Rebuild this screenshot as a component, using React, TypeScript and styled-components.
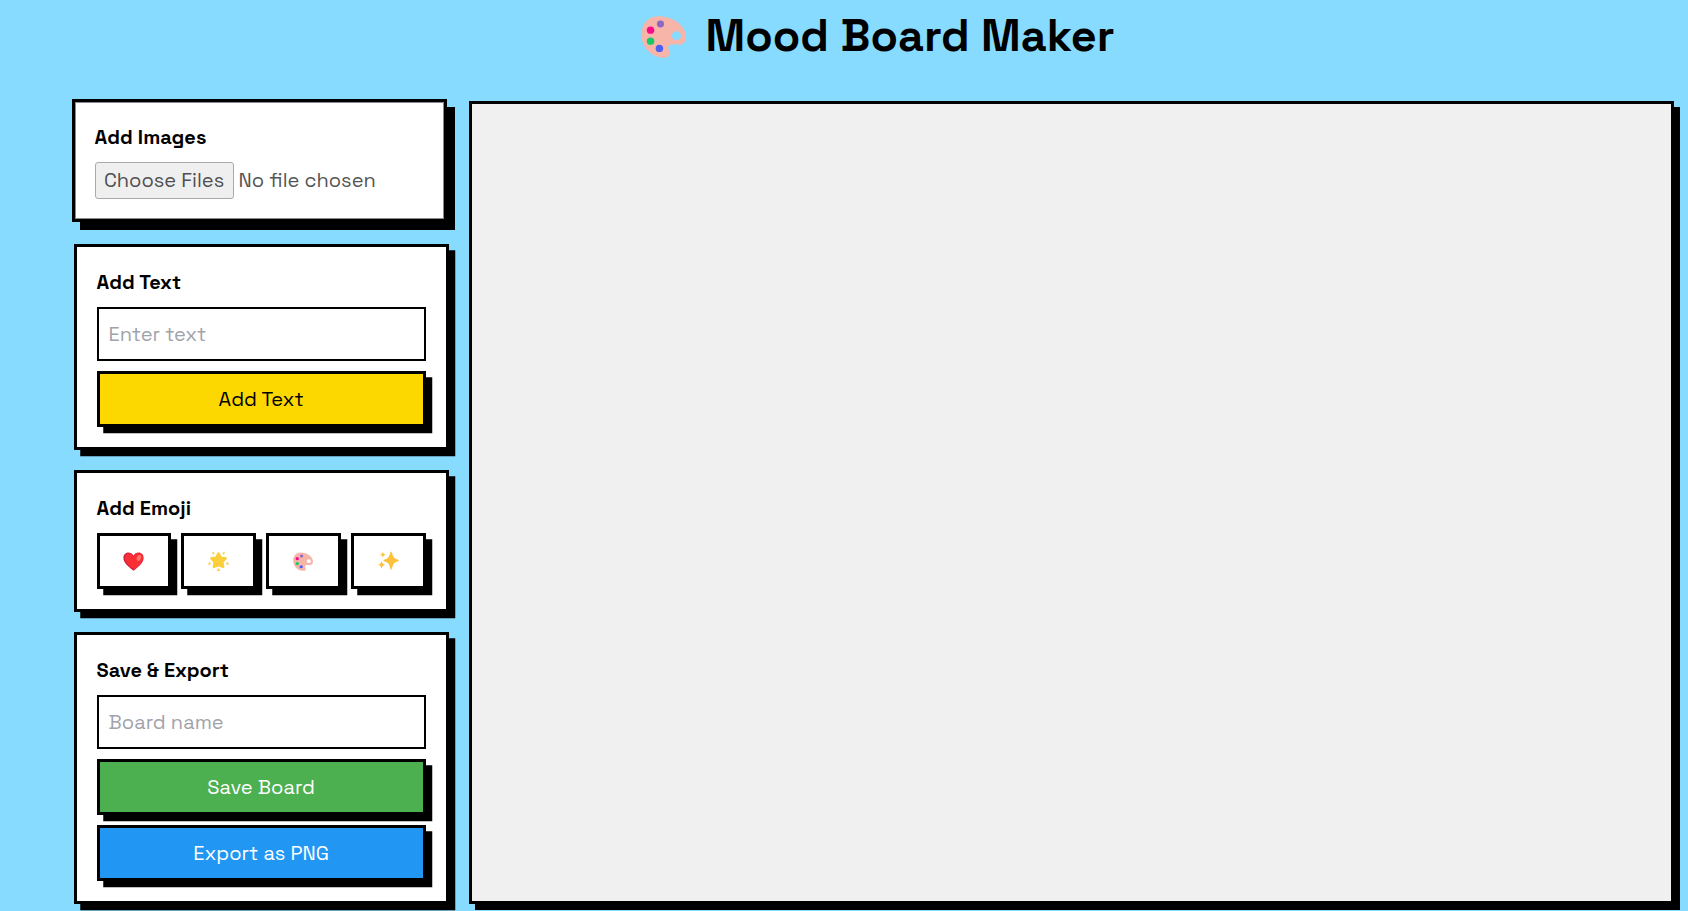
import React from "react";
import styled, { createGlobalStyle, css } from "styled-components";

const GlobalStyle = createGlobalStyle`
  *, *::before, *::after { box-sizing: border-box; }
  body {
    margin: 0;
    overflow: hidden;
    background: #86dbff;
    color: #000;
    font-family: "Space Grotesk", Inter, sans-serif;
    font-size: 20px;
    line-height: 30px;
  }
`;

const Page = styled.div`
  height: 911px;
  padding: 0 14.4px 7px 73.6px;
  display: flex;
  flex-direction: column;
`;

const Header = styled.header`
  height: 71px;
  margin-bottom: 30px;
  padding-left: 8px;
  display: flex;
  align-items: center;
  justify-content: center;
  gap: 20px;
`;

const TitleIcon = styled.span`
  display: flex;
  padding-top: 2px;
`;

const Title = styled.h1`
  margin: 0;
  font-size: 45px;
  font-weight: 700;
  line-height: 55px;
`;

const Workspace = styled.main`
  flex: 1;
  display: grid;
  grid-template-columns: 375px 1fr;
  gap: 20px;
`;

const Sidebar = styled.aside`
  display: flex;
  flex-direction: column;
  gap: 20px;
`;

const Card = styled.section<{ $raised?: boolean }>`
  padding: 20px;
  display: flex;
  flex-direction: column;
  gap: 10px;
  background: #fff;
  border: 3px solid #000;
  box-shadow: 6.25px 6.25px 0 #000;
  ${(p) =>
    p.$raised &&
    css`
      transform: translate(-2px, -2px);
      box-shadow: 8px 8px 0 #000, inset 0 0 0 1px #8a8a8a;
    `}
`;

const CardTitle = styled.h2`
  margin: 0;
  font-size: 20px;
  font-weight: 600;
  line-height: 30px;
`;

const FilePicker = styled.div`
  height: 37px;
  display: flex;
  align-items: center;
  gap: 5px;
  color: #555;
`;

const FileButton = styled.button`
  width: 139px;
  height: 37px;
  padding: 0 0 1px;
  border: 1px solid #aaa;
  border-radius: 3px;
  background: #efefef;
  color: #505050;
  font: inherit;
`;

const FileStatus = styled.span`
  padding-bottom: 1px;
`;

const Field = styled.input`
  width: 100%;
  height: 54px;
  padding: 10px;
  border: 2px solid #000;
  border-radius: 0;
  background: #fff;
  font: inherit;
  &::placeholder { color: #9fa3aa; opacity: 1; }
`;

const Button = styled.button<{ $fill: string; $ink?: string }>`
  height: 56px;
  padding: 0;
  display: flex;
  align-items: center;
  justify-content: center;
  border: 3px solid #000;
  box-shadow: 6.25px 6.25px 0 #000;
  background: ${(p) => p.$fill};
  color: ${(p) => p.$ink ?? "#000"};
  font: inherit;
`;

const EmojiGrid = styled.div`
  display: grid;
  grid-template-columns: repeat(4, 1fr);
  gap: 10px;
`;

const Canvas = styled.div`
  background: #f0f0f0;
  border: 3px solid #000;
  box-shadow: 6px 6px 0 #000;
`;

const Palette = ({ width, height }: { width: number; height: number }) => (
  <svg width={width} height={height} viewBox="20 20 132 130" preserveAspectRatio="none" aria-label="palette">
    <path
      fill="#f7b5aa"
      fillRule="evenodd"
      d="M72 24C42 24 21 47 21 78c0 40 30 68 62 71 14 1 22-4 21-15-1-8-5-11-4-17 1-5 5-8 10-8h22c13 0 20-9 20-22 0-36-40-63-80-63Zm52 45a13.500 13.500 0 1 1 0 27a13.500 13.500 0 1 1 0-27Z"
    />
    <circle cx="77" cy="47" r="10.500" fill="#8e66c4" />
    <circle cx="48" cy="66" r="11" fill="#f80a8c" />
    <circle cx="48" cy="99" r="11" fill="#14ca66" />
    <circle cx="74" cy="121" r="11" fill="#4b5ff3" />
  </svg>
);

const Heart = () => (
  <svg width="21" height="19" viewBox="0 0 21 19" aria-label="heart">
    <path fill="#d5203f" d="M10.500 18.800C7.500 16 .4 11.500.4 5.900.4 2.800 2.500.5 5.300.5c2.200 0 4.100 1.200 5.200 3.200C11.600 1.700 13.500.5 15.700.5c2.800 0 4.900 2.300 4.900 5.400 0 5.600-7.100 10.100-10.100 12.900Z" />
    <path fill="#fa2f35" d="M11 17.600C8.500 15 2 11.300 2 6c0-2.400 1.500-4.400 3.800-4.400 2 0 3.600 1.300 4.700 3.500 1.100-2.700 3-4.100 5.100-4.100 2.700 0 4.500 2.100 4.500 5 0 5.100-6.600 9-9.100 11.600Z" />
    <ellipse cx="15.900" cy="5.900" rx="2" ry="3.100" fill="#ff7568" transform="rotate(24 15.900 5.900)" />
  </svg>
);

const GlowingStar = () => (
  <svg width="21" height="21" viewBox="0 0 21 21" aria-label="glowing star">
    <path fill="#fbcf3b" stroke="#fbcf3b" strokeWidth="2.600" strokeLinejoin="round" d="m10.500 2.600 2.200 4.100 4.800.7-3.200 3.600.8 4.800-4.600-1.700-4.600 1.700.8-4.800-3.200-3.600 4.800-.7Z" />
    <g fill="#f5cf50">
      <path d="m4 .6 2.900 1.500-1.900 1.900Z" />
      <path d="m17 .6-2.900 1.500 1.900 1.900Z" />
      <path d="m0 13.900 1.200-3.200 2.200 2.200Z" />
      <path d="m21 13.900-1.200-3.200-2.200 2.200Z" />
      <path d="m10.500 16.900 1.900 3.200H8.600Z" />
    </g>
  </svg>
);

const Sparkles = () => (
  <svg width="21" height="20" viewBox="0 0 21 20" fill="#fcc23b" aria-label="sparkles">
    <path d="M13.100.4c1 0 1.200 3.800 2.700 5.800 1.500 2 5 2.200 5 3.200s-3.500 1.200-5 3.200c-1.500 2-1.700 6.200-2.700 6.200s-1.200-4.200-2.700-6.200c-1.500-2-5-2.200-5-3.200s3.500-1.200 5-3.200c1.500-2 1.700-5.800 2.700-5.800Z" />
    <path d="M4.900.8c.6 1.800 1 2.400 2.800 2.900C5.900 4.300 5.500 4.800 4.900 6.600 4.300 4.800 3.900 4.300 2.100 3.700 3.900 3.200 4.300 2.600 4.900.8Z" />
    <path d="M3.600 9.900c.7 2.400 1.300 3.200 3.600 3.900-2.300.7-2.900 1.500-3.600 3.900C2.900 15.300 2.300 14.500 0 13.800c2.300-.7 2.900-1.500 3.600-3.900Z" />
  </svg>
);

export default function App() {
  return (
    <>
      <GlobalStyle />
      <Page>
        <Header>
          <TitleIcon>
            <Palette width={45} height={43} />
          </TitleIcon>
          <Title>Mood Board Maker</Title>
        </Header>
        <Workspace>
          <Sidebar>
            <Card $raised>
              <CardTitle>Add Images</CardTitle>
              <FilePicker>
                <FileButton type="button">Choose Files</FileButton>
                <FileStatus>No file chosen</FileStatus>
              </FilePicker>
            </Card>
            <Card>
              <CardTitle>Add Text</CardTitle>
              <Field placeholder="Enter text" />
              <Button $fill="#fdd700">Add Text</Button>
            </Card>
            <Card>
              <CardTitle>Add Emoji</CardTitle>
              <EmojiGrid>
                <Button $fill="#fff"><Heart /></Button>
                <Button $fill="#fff"><GlowingStar /></Button>
                <Button $fill="#fff"><Palette width={20} height={19} /></Button>
                <Button $fill="#fff"><Sparkles /></Button>
              </EmojiGrid>
            </Card>
            <Card>
              <CardTitle>Save &amp; Export</CardTitle>
              <Field placeholder="Board name" />
              <Button $fill="#4caf50" $ink="#fff">Save Board</Button>
              <Button $fill="#2196f3" $ink="#fff">Export as PNG</Button>
            </Card>
          </Sidebar>
          <Canvas />
        </Workspace>
      </Page>
    </>
  );
}
